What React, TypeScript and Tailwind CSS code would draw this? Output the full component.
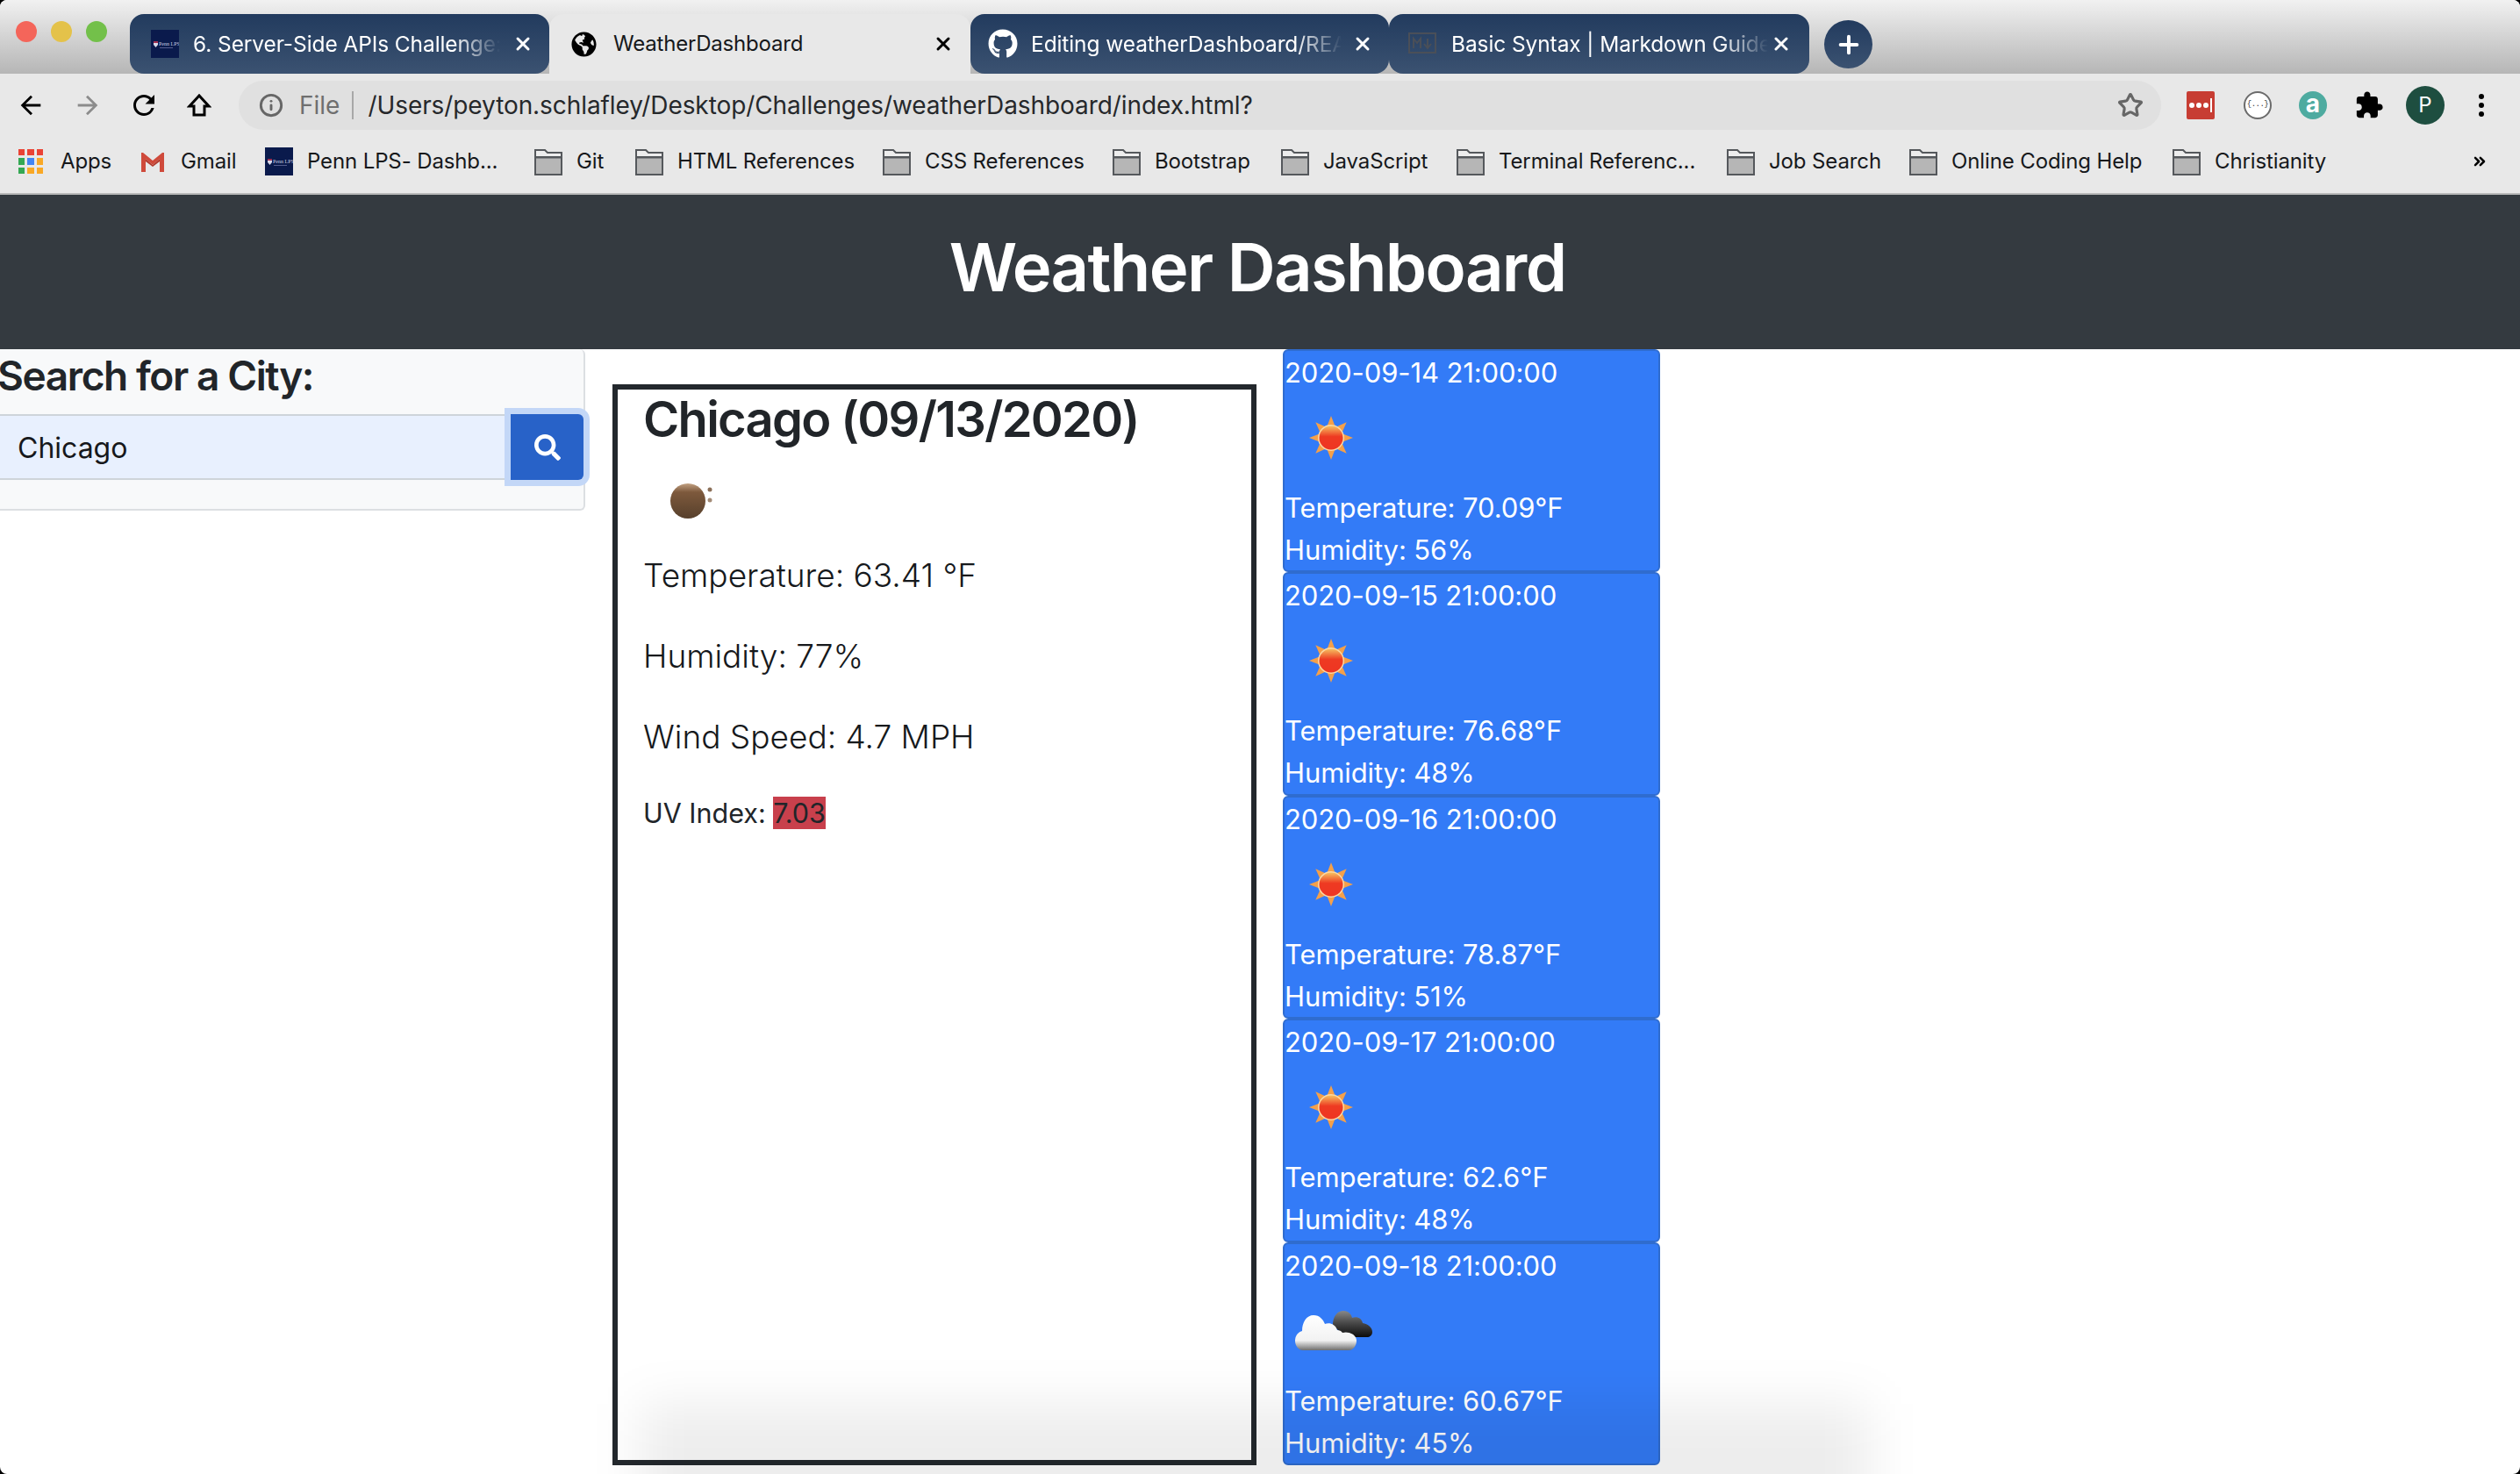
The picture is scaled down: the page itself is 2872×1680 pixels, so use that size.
import React from "react";
import { Info, Star, Plus, X, ChevronsRight } from "lucide-react";
import { FaGithub, FaGlobeAmericas, FaSearch } from "react-icons/fa";

const ui = "font-['Inter','Liberation_Sans',sans-serif]";

function Traffic() {
  return (
    <div className="flex w-[148px] shrink-0 items-center gap-[16px] self-stretch pb-[12px] pl-[18px]">
      <span className="h-[24px] w-[24px] rounded-full bg-[#f4655a]" />
      <span className="h-[24px] w-[24px] rounded-full bg-[#e4c24a]" />
      <span className="h-[24px] w-[24px] rounded-full bg-[#73c04a]" />
    </div>
  );
}

function PennIcon() {
  return (
    <span className="flex h-[32px] w-[32px] shrink-0 items-center justify-center bg-[#0a1a4c]">
      <svg viewBox="0 0 32 32" className="h-[32px] w-[32px]">
        <path d="M3 13h5v4l-2.5 3L3 17z" fill="#d8d8e8" />
        <path d="M3 13h5v2H3z" fill="#a03050" />
        <text x="9" y="18" fontSize="6" fill="#c8cce0" fontFamily="'Liberation Serif', serif">Penn LPS</text>
        <rect x="10" y="20" width="15" height="0.8" fill="#6a70a0" />
      </svg>
    </span>
  );
}

function MdIcon() {
  return (
    <span className="flex h-[32px] w-[32px] shrink-0 items-center justify-center">
      <svg viewBox="0 0 32 32" className="h-[32px] w-[32px]">
        <rect x="1" y="4" width="30" height="22" fill="none" stroke="#4a4f58" strokeWidth="2" />
        <path d="M6 21V10l4 5 4-5v11M22 10v10M18 16l4 5 4-5" fill="none" stroke="#4a4f58" strokeWidth="2" />
      </svg>
    </span>
  );
}

function Tabs() {
  const darkTab = "flex h-[68px] shrink-0 items-center bg-gradient-to-b from-[#223b5e] to-[#3b5271] text-white";
  const label = "overflow-hidden whitespace-nowrap text-[24.5px] tracking-[-0.1px] [mask-image:linear-gradient(to_right,black_85%,transparent)]";
  return (
    <div className="flex h-[84px] items-end bg-gradient-to-b from-[#f1f1f1] to-[#b6b6b6]">
      <Traffic />
      <div className={`${darkTab} w-[478px] rounded-[16px] pl-[24px]`}>
        <PennIcon />
        <span className={`${label} ml-[16px] w-[350px]`}>6. Server-Side APIs Challenge:</span>
        <X className="ml-[14px] h-[24px] w-[24px]" strokeWidth={3} />
      </div>
      <div className="flex h-[68px] w-[480px] shrink-0 items-center rounded-t-[16px] bg-[#e8e8e8] pl-[25px] text-[#16181b]">
        <FaGlobeAmericas className="h-[29px] w-[29px] text-black" />
        <span className="ml-[19px] w-[364px] whitespace-nowrap text-[24px] tracking-[-0.2px]">WeatherDashboard</span>
        <X className="h-[24px] w-[24px] text-black" strokeWidth={3} />
      </div>
      <div className={`${darkTab} w-[477px] rounded-[16px] pl-[20px]`}>
        <FaGithub className="h-[34px] w-[34px] shrink-0" />
        <span className={`${label} ml-[15px] w-[354px]`}>Editing weatherDashboard/README</span>
        <X className="ml-[12px] h-[24px] w-[24px]" strokeWidth={3} />
      </div>
      <div className={`${darkTab} w-[479px] rounded-[16px] pl-[22px]`}>
        <MdIcon />
        <span className={`${label} ml-[17px] w-[361px]`}>Basic Syntax | Markdown Guide</span>
        <X className="ml-[3px] h-[24px] w-[24px]" strokeWidth={3} />
      </div>
      <div className="mb-[6px] ml-[17px] flex h-[55px] w-[55px] shrink-0 items-center justify-center rounded-full bg-gradient-to-b from-[#223b5e] to-[#3b5271] text-white">
        <Plus className="h-[32px] w-[32px]" strokeWidth={3} />
      </div>
    </div>
  );
}

function HomeGlyph() {
  return (
    <svg viewBox="0 0 28 28" className="h-[28px] w-[28px]" fill="none" stroke="#000" strokeWidth="3">
      <path d="M14 3 3 15h5v10h12V15h5z" strokeLinejoin="miter" />
    </svg>
  );
}

function Arrow({ className, flip }: { className: string; flip?: boolean }) {
  return (
    <svg viewBox="0 0 24 24" className={`h-[34px] w-[34px] ${className} ${flip ? "-scale-x-100" : ""}`} fill="currentColor">
      <path d="M20 11H7.83l5.59-5.59L12 4l-8 8 8 8 1.41-1.41L7.83 13H20v-2z" />
    </svg>
  );
}

function Reload() {
  return (
    <svg viewBox="0 0 24 24" className="h-[36px] w-[36px] text-black" fill="currentColor">
      <path d="M17.65 6.35A7.958 7.958 0 0 0 12 4c-4.42 0-7.99 3.58-7.99 8s3.57 8 7.99 8c3.73 0 6.84-2.55 7.73-6h-2.08A5.99 5.99 0 0 1 12 18c-3.31 0-6-2.69-6-6s2.69-6 6-6c1.66 0 3.14.69 4.22 1.78L13 11h7V4l-2.35 2.35z" />
    </svg>
  );
}

function Puzzle() {
  return (
    <svg viewBox="0 0 24 24" className="ml-[31px] h-[34px] w-[34px] text-black" fill="currentColor">
      <path d="M20.5 11H19V7c0-1.1-.9-2-2-2h-4V3.5C13 2.12 11.88 1 10.5 1S8 2.12 8 3.5V5H4c-1.1 0-1.99.9-1.99 2v3.8H3.5c1.49 0 2.7 1.21 2.7 2.7s-1.21 2.7-2.7 2.7H2V20c0 1.1.9 2 2 2h3.8v-1.5c0-1.49 1.21-2.7 2.7-2.7 1.49 0 2.7 1.21 2.7 2.7V22H17c1.1 0 2-.9 2-2v-4h1.5c1.38 0 2.5-1.12 2.5-2.5S21.88 11 20.5 11z" />
    </svg>
  );
}

function Toolbar() {
  return (
    <div className="flex h-[64px] items-start bg-[#e8e8e8] pt-[8px]">
      <div className="flex h-[56px] w-[272px] shrink-0 items-center pl-[18px]">
        <Arrow className="text-black" />
        <Arrow className="ml-[31px] text-[#8c8c8c]" flip />
        <span className="ml-[29px]"><Reload /></span>
        <span className="ml-[31px]"><HomeGlyph /></span>
      </div>
      <div className="flex h-[56px] w-[2191px] shrink-0 items-center rounded-full bg-[#e0e0e0] pl-[23px]">
        <Info className="h-[28px] w-[28px] text-[#666]" strokeWidth={2.5} />
        <span className="ml-[18px] text-[28px] text-[#6f6f6f]">File</span>
        <span className="ml-[14px] h-[32px] w-[2px] bg-[#a8a8a8]" />
        <span className="ml-[16px] w-[2016px] whitespace-nowrap text-[28px] tracking-[-0.08px] text-[#26282b]">/Users/peyton.schlafley/Desktop/Challenges/weatherDashboard/index.html?</span>
        <Star className="-ml-[22px] h-[30px] w-[30px] text-[#666]" strokeWidth={2.5} />
      </div>
      <div className="flex h-[56px] flex-1 items-center pl-[29px]">
        <span className="flex h-[32px] w-[32px] items-center justify-center gap-[2px] rounded-[2px] bg-[#c73d33]">
          <span className="h-[6px] w-[6px] rounded-full bg-white" />
          <span className="h-[6px] w-[6px] rounded-full bg-white" />
          <span className="h-[6px] w-[6px] rounded-full bg-white" />
          <span className="h-[16px] w-[2px] bg-white" />
        </span>
        <span className="ml-[33px] flex h-[32px] w-[32px] items-center justify-center rounded-full border-2 border-[#6b6b6b] bg-white font-['Liberation_Mono',monospace] text-[9px] tracking-[-0.5px] text-[#333]">{"{...}"}</span>
        <span className="ml-[31px] flex h-[32px] w-[32px] items-center justify-center rounded-full bg-[#4eaba0] pb-[4px] text-[28px] font-bold leading-none text-white">a</span>
        <Puzzle />
        <span className="ml-[25px] flex h-[44px] w-[44px] items-center justify-center rounded-full bg-[#1e4e40] text-[24px] text-white">P</span>
        <span className="ml-[39px] flex flex-col gap-[4px]">
          <span className="h-[6px] w-[6px] rounded-full bg-black" />
          <span className="h-[6px] w-[6px] rounded-full bg-black" />
          <span className="h-[6px] w-[6px] rounded-full bg-black" />
        </span>
      </div>
    </div>
  );
}

function Folder() {
  return (
    <svg viewBox="0 0 32 32" className="h-[32px] w-[32px] shrink-0">
      <path d="M1 31V3h11l3 3h16v25z" fill="#ededed" stroke="#55585c" strokeWidth="2" />
      <rect x="2" y="12" width="28" height="18" fill="#b6b6b6" />
      <rect x="2" y="10" width="28" height="2.5" fill="#55585c" />
    </svg>
  );
}

function AppsIcon() {
  const c = ["bg-[#ea4335]", "bg-[#ea4335]", "bg-[#ea4335]", "bg-[#34a853]", "bg-[#4285f4]", "bg-[#f9a825]", "bg-[#34a853]", "bg-[#f9a825]", "bg-[#f9a825]"];
  return (
    <span className="mr-[4px] grid h-[28px] w-[28px] shrink-0 grid-cols-3 gap-[3px]">
      {c.map((x, i) => (
        <span key={i} className={x} />
      ))}
    </span>
  );
}

function GmailIcon() {
  return (
    <svg viewBox="0 0 28 24" className="mr-[2px] h-[24px] w-[28px] shrink-0">
      <path d="M1 2v22h5V9l8 7 8-7v15h5V2h-2l-11 9L3 2z" fill="#cf4a3b" />
      <path d="M6 9l8 7 8-7v3l-8 6-8-6z" fill="#b23a2d" />
    </svg>
  );
}

function Bookmark({ name, w, icon }: { name: string; w: string; icon?: React.ReactNode }) {
  return (
    <div className={`flex shrink-0 items-center ${w}`}>
      {icon ?? <Folder />}
      <span className="ml-[16px] whitespace-nowrap text-[24px] tracking-[-0.12px] text-[#16181b]">{name}</span>
    </div>
  );
}

function Bookmarks() {
  return (
    <div className="flex h-[74px] items-center border-b-2 border-[#b9b9b9] bg-[#e8e8e8] pl-[21px]">
      <Bookmark name="Apps" w="w-[139px]" icon={<AppsIcon />} />
      <Bookmark name="Gmail" w="w-[142px]" icon={<GmailIcon />} />
      <Bookmark name="Penn LPS- Dashb..." w="w-[307px]" icon={<PennIcon />} />
      <Bookmark name="Git" w="w-[115px]" />
      <Bookmark name="HTML References" w="w-[282px]" />
      <Bookmark name="CSS References" w="w-[262px]" />
      <Bookmark name="Bootstrap" w="w-[192px]" />
      <Bookmark name="JavaScript" w="w-[200px]" />
      <Bookmark name="Terminal Referenc..." w="w-[308px]" />
      <Bookmark name="Job Search" w="w-[208px]" />
      <Bookmark name="Online Coding Help" w="w-[300px]" />
      <Bookmark name="Christianity" w="w-[340px]" />
      <ChevronsRight className="h-[20px] w-[20px] text-black" strokeWidth={3} />
    </div>
  );
}

function Sun({ id }: { id: string }) {
  const rays = [0, 45, 90, 135, 180, 225, 270, 315];
  return (
    <svg viewBox="0 0 50 50" className="h-[50px] w-[50px]">
      <defs>
        <linearGradient id={id} x1="0" y1="0" x2="0" y2="1">
          <stop offset="0" stopColor="#f6c060" />
          <stop offset="0.45" stopColor="#ee3a22" />
          <stop offset="1" stopColor="#ee3522" />
        </linearGradient>
      </defs>
      {rays.map((r) => (
        <path key={r} d="M25 0 30 13H20z" fill="#f4a04a" transform={`rotate(${r} 25 25)`} />
      ))}
      <circle cx="25" cy="25" r="15" fill="#fbd9a6" />
      <circle cx="25" cy="25" r="13.5" fill={`url(#${id})`} />
    </svg>
  );
}

function Clouds() {
  return (
    <svg viewBox="0 0 95 50" className="h-[50px] w-[95px]">
      <defs>
        <linearGradient id="cw" x1="0" y1="0" x2="0" y2="1">
          <stop offset="0" stopColor="#ffffff" />
          <stop offset="0.72" stopColor="#f2f2f2" />
          <stop offset="1" stopColor="#6e6e6e" />
        </linearGradient>
        <linearGradient id="cd" x1="0" y1="0" x2="0" y2="1">
          <stop offset="0" stopColor="#888" />
          <stop offset="0.45" stopColor="#4a4a4a" />
          <stop offset="1" stopColor="#0c0c0c" />
        </linearGradient>
      </defs>
      <path d="M46 18c0-9 5-16 12-16 6 0 9 4 10 8 6-2 11 1 12 6 6 1 11 5 11 10 0 4-3 6-6 6H60z" fill="url(#cd)" />
      <path d="M3 36c0-6 4-10 8-11 0-10 5-18 13-18 7 0 11 5 13 10 5-2 12 0 14 7 2 0 5 1 6 3 7-2 16 2 16 9 0 6-4 11-9 11H12c-5 0-9-5-9-11z" fill="url(#cw)" />
    </svg>
  );
}

function Moon() {
  return (
    <svg viewBox="0 0 56 44" className="h-[44px] w-[56px]">
      <defs>
        <linearGradient id="mn" x1="0" y1="0" x2="0" y2="1">
          <stop offset="0" stopColor="#c2a182" />
          <stop offset="0.25" stopColor="#7d593c" />
          <stop offset="1" stopColor="#57402c" />
        </linearGradient>
      </defs>
      <circle cx="21" cy="22" r="20" fill="url(#mn)" />
      <circle cx="46" cy="9" r="2.5" fill="#8b6f58" />
      <circle cx="46" cy="21" r="2.5" fill="#a38b76" />
    </svg>
  );
}

const forecast = [
  { d: "2020-09-14 21:00:00", t: "70.09", h: "56", sun: true },
  { d: "2020-09-15 21:00:00", t: "76.68", h: "48", sun: true },
  { d: "2020-09-16 21:00:00", t: "78.87", h: "51", sun: true },
  { d: "2020-09-17 21:00:00", t: "62.6", h: "48", sun: true },
  { d: "2020-09-18 21:00:00", t: "60.67", h: "45", sun: false },
];

function ForecastCard({ d, t, h, sun }: { d: string; t: string; h: string; sun: boolean }) {
  return (
    <div className="flex h-[254.4px] flex-col rounded-[6px] border-2 border-[#2f6ccf] bg-[#337bf7] pt-[1px] text-[31px] leading-[48px] tracking-[-0.1px] text-white">
      <div className="h-[46px] shrink-0">{d}</div>
      <div className={`mb-[4px] flex h-[104px] shrink-0 items-center ${sun ? "pl-[28px]" : "pl-[9px]"}`}>
        {sun ? <Sun id={`s${d.slice(8, 10)}`} /> : <Clouds />}
      </div>
      <div className="h-[48px] shrink-0">Temperature: {t}°F</div>
      <div className="h-[48px] shrink-0">Humidity: {h}%</div>
    </div>
  );
}

export default function App() {
  return (
    <div className="h-[1680px] w-[2872px] bg-black">
      <div className={`relative flex h-[1680px] w-[2872px] flex-col overflow-hidden rounded-[8px] bg-white ${ui}`}>
        <Tabs />
        <Toolbar />
        <Bookmarks />
        <header className="flex h-[176px] items-center justify-center bg-[#343a40] pb-[12px] pr-[6px] text-[76px] font-semibold tracking-[-1.7px] text-white">Weather Dashboard</header>
        <main className="flex flex-1 items-start text-[#212529]">
          <section className="h-[184px] w-[667px] shrink-0 rounded-r-[6px] border-2 border-t-0 border-l-0 border-[#dcdfe2] bg-[#f8f9fa]">
            <h2 className="-ml-[3px] whitespace-nowrap text-[46px] font-semibold leading-[60px] tracking-[-1.4px]">Search for a City:</h2>
            <div className="mt-[14px] flex h-[75px] items-stretch">
              <div className="flex flex-1 items-center border-y-2 border-[#ced4da] bg-[#e8f0fe] pl-[20px] pt-[3px] text-[32px] text-[#16181b]">Chicago</div>
              <div className="flex w-[83px] items-center justify-center rounded-r-[6px] bg-[#2862c8] text-white shadow-[0_0_0_7px_#c3d7f7]">
                <FaSearch className="h-[30px] w-[30px]" />
              </div>
            </div>
          </section>
          <section className="ml-[31px] mt-[40px] h-[1232px] w-[734px] shrink-0 border-[6px] border-[#23282d] pl-[29px]">
            <h2 className="mt-[1px] whitespace-nowrap text-[56px] font-semibold leading-[66px] tracking-[-1.7px]">Chicago (09/13/2020)</h2>
            <div className="mt-[10px] flex h-[100px] items-center pl-[30px]"><Moon /></div>
            <p className="mt-[7px] text-[37px] font-light leading-[56px] text-[#16191c]">Temperature: 63.41 °F</p>
            <p className="mt-[36px] text-[37px] font-light leading-[56px] text-[#16191c]">Humidity: 77%</p>
            <p className="mt-[36px] text-[37px] font-light leading-[56px] text-[#16191c]">Wind Speed: 4.7 MPH</p>
            <p className="mt-[37px] text-[30.5px] leading-[44px]">UV Index: <span className="bg-[#c8404c]">7.03</span></p>
          </section>
          <section className="ml-[30px] w-[430px] shrink-0">
            {forecast.map((f) => (
              <ForecastCard key={f.d} {...f} />
            ))}
          </section>
        </main>
        <div className="pointer-events-none absolute -bottom-[50px] left-[730px] h-[130px] w-[1400px] bg-black/[0.07] blur-[28px]" />
      </div>
    </div>
  );
}
